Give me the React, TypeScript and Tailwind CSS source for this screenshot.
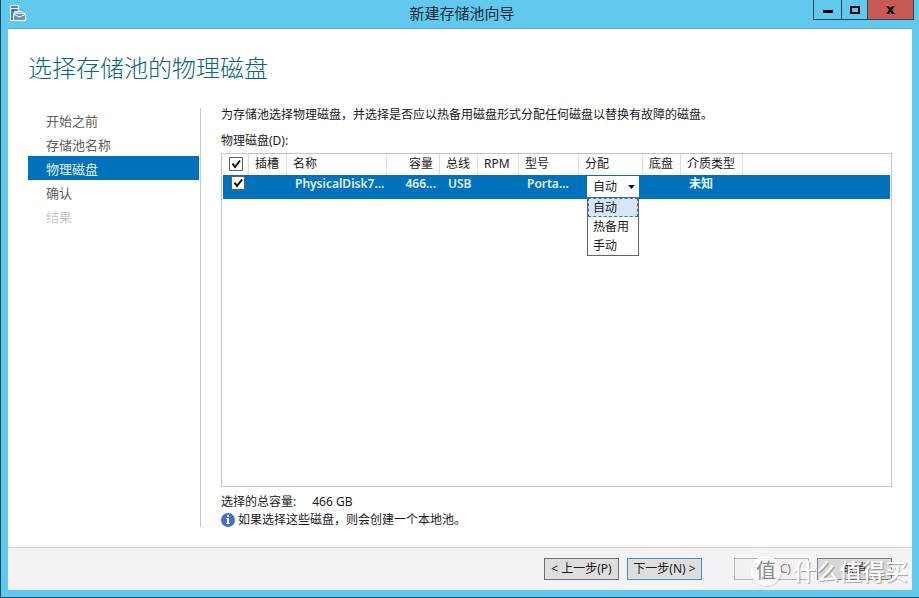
import { useState } from 'react';

const steps = [
  { label: '开始之前', state: 'normal' },
  { label: '存储池名称', state: 'normal' },
  { label: '物理磁盘', state: 'active' },
  { label: '确认', state: 'normal' },
  { label: '结果', state: 'disabled' },
];

const stepStyles: Record<string, string> = {
  normal: 'text-[#606060]',
  active: 'bg-[#0072bc] text-[#e4f3fc]',
  disabled: 'text-[#c8c8c8]',
};

const allocations = ['自动', '热备用', '手动'];

function ServerIcon() {
  return (
    <svg width="17" height="17" viewBox="0 0 17 17" fill="none">
      <path d="M0.500 0.500h8v6h-4v9h-4z" fill="#3a8fbd" stroke="#fff" />
      <path d="M1 3.500h7" stroke="#fff" />
      <path d="M2 5.500h3" stroke="#1f6c98" />
      <path d="M3.500 8.500h12v7h-12z" fill="#7590a3" stroke="#fff" />
      <path d="M6.500 8.500l1.500-2h3.500l1.500 2" fill="#62c9ee" stroke="#fff" />
      <path d="M4 9.500l5.500 2.500 5.500-2.500" stroke="#fff" />
    </svg>
  );
}

function InfoIcon() {
  return (
    <svg width="14" height="14" viewBox="0 0 14 14">
      <circle cx="7" cy="7" r="7" fill="#3f6fd1" />
      <rect x="6" y="2" width="2" height="2" fill="#fff" />
      <path d="M5 5h3v5h1v1H5v-1h1V6H5z" fill="#fff" />
    </svg>
  );
}

function Check({ label, checked, onChange }: { label: string; checked: boolean; onChange: (v: boolean) => void }) {
  return (
    <span className="grid h-[14px] w-[14px]">
      <input
        type="checkbox"
        aria-label={label}
        checked={checked}
        onChange={(e) => onChange(e.target.checked)}
        className="col-start-1 row-start-1 h-[14px] w-[14px] appearance-none border border-[#606060] bg-white"
      />
      {checked && (
        <svg className="pointer-events-none col-start-1 row-start-1" width="14" height="14" viewBox="0 0 14 14" fill="none">
          <path d="M3.500 6.500l2.500 3.500 5-6.500" stroke="#111" strokeWidth="2" />
        </svg>
      )}
    </span>
  );
}

export default function App() {
  const [all, setAll] = useState(true);
  const [selected, setSelected] = useState(true);
  const [allocation, setAllocation] = useState('自动');

  const th = 'border-r border-[#dcdcdc] px-[6px] text-left align-top font-normal';
  const td = 'overflow-hidden pl-2 text-left align-top whitespace-nowrap';
  const btn = 'h-[22px] w-[75px] border text-center whitespace-nowrap';

  return (
    <div className="flex min-h-screen flex-col border-b border-l border-[#14506a] bg-[#62c9ee] font-['Noto_Sans','Noto_Sans_CJK_SC',sans-serif] text-xs leading-[14px] text-[#1a1a1a]">
      <header className="grid h-7 grid-cols-[1fr_auto_1fr] items-start pr-[5px] pl-[9px]">
        <div className="pt-[5px]">
          <ServerIcon />
        </div>
        <div className="text-[15px] leading-[26px] text-[#0e2a38]">新建存储池向导</div>
        <div className="flex justify-self-end border-x border-b border-[#24455a]">
          <button aria-label="最小化" className="flex h-[19px] w-7 items-center justify-center border-r border-[#24455a]">
            <svg width="10" height="9" viewBox="0 0 10 9">
              <path d="M0 5h10v3H0z" fill="#000" />
            </svg>
          </button>
          <button aria-label="最大化" className="flex h-[19px] w-[26px] items-center justify-center border-r border-[#24455a]">
            <svg width="10" height="8" viewBox="0 0 10 8">
              <path d="M1 1h8v6H1z" fill="none" stroke="#000" strokeWidth="2" />
            </svg>
          </button>
          <button aria-label="关闭" className="flex h-[19px] w-[45px] items-center justify-center bg-[#c75b54]">
            <svg width="9" height="8" viewBox="0 0 9 8">
              <path d="M0 0h3l1.500 2L6 0h3L6 4l3 4H6L4.500 6 3 8H0l3-4z" fill="#111" />
            </svg>
          </button>
        </div>
      </header>

      <div className="mr-[7px] mb-[7px] ml-[7px] flex flex-1 flex-col border-t border-[#6aaac4] bg-white">
        <main className="flex flex-1 flex-col px-5 pt-[23px] pb-5">
          <h1 className="text-2xl leading-8 font-light text-[#0c6580]">选择存储池的物理磁盘</h1>

          <div className="mt-6 flex flex-1">
            <nav className="w-[173px] shrink-0 border-r border-[#c8c8c8] pr-px text-[13px] leading-[26px]">
              {steps.map((s) => (
                <div key={s.label} className={`h-6 pl-[18px] ${stepStyles[s.state]}`}>
                  {s.label}
                </div>
              ))}
            </nav>

            <section className="ml-5 flex min-w-0 flex-1 flex-col">
              <p>为存储池选择物理磁盘，并选择是否应以热备用磁盘形式分配任何磁盘以替换有故障的磁盘。</p>
              <p className="mt-3">物理磁盘(D):</p>

              <div className="mt-[5px] flex-1 border border-[#c4c4c4] px-px">
                <table className="w-full table-fixed border-separate border-spacing-0 leading-[19px]">
                  <colgroup>
                    <col className="w-[26px]" />
                    <col className="w-[38px]" />
                    <col className="w-[100px]" />
                    <col className="w-[53px]" />
                    <col className="w-[38px]" />
                    <col className="w-[41px]" />
                    <col className="w-[60px]" />
                    <col className="w-[64px]" />
                    <col className="w-[38px]" />
                    <col className="w-[62px]" />
                    <col />
                  </colgroup>
                  <thead>
                    <tr className="h-[21px]">
                      <th className="border-r border-[#dcdcdc] pt-[3px] pl-[6px] align-top">
                        <Check label="全选" checked={all} onChange={setAll} />
                      </th>
                      <th className={th}>插槽</th>
                      <th className={th}>名称</th>
                      <th className="border-r border-[#dcdcdc] px-[6px] text-right align-top font-normal">容量</th>
                      <th className={th}>总线</th>
                      <th className={th}>RPM</th>
                      <th className={th}>型号</th>
                      <th className={th}>分配</th>
                      <th className={th}>底盘</th>
                      <th className={th}>介质类型</th>
                      <th />
                    </tr>
                  </thead>
                  <tbody>
                    <tr className="h-6 bg-[#0072bc] leading-[18px] font-semibold text-[#e4f3fc]">
                      <td className="pt-px pl-2 align-top">
                        <Check label="PhysicalDisk7" checked={selected} onChange={setSelected} />
                      </td>
                      <td />
                      <td className={td}>PhysicalDisk7...</td>
                      <td className="pr-1 text-right align-top whitespace-nowrap">466...</td>
                      <td className={td}>USB</td>
                      <td />
                      <td className={td}>Porta...</td>
                      <td className="pt-px pl-2 align-top">
                        <div className="relative w-[52px] font-normal text-[#1a1a1a]">
                          <div className="grid items-center">
                            <select
                              aria-label="分配"
                              value={allocation}
                              onChange={(e) => setAllocation(e.target.value)}
                              className="col-start-1 row-start-1 h-[21px] w-full appearance-none bg-white pl-[6px] leading-[21px]"
                            >
                              {allocations.map((a) => (
                                <option key={a}>{a}</option>
                              ))}
                            </select>
                            <svg className="pointer-events-none col-start-1 row-start-1 mr-1 justify-self-end" width="7" height="4" viewBox="0 0 7 4">
                              <path d="M0 0h7L3.500 4z" fill="#111" />
                            </svg>
                          </div>
                          <ul role="listbox" aria-label="分配选项" className="absolute top-full left-0 z-10 w-full border border-[#5a6470] bg-white leading-[17px]">
                            {allocations.map((a) => (
                              <li
                                key={a}
                                role="option"
                                aria-selected={a === allocation}
                                onClick={() => setAllocation(a)}
                                className={
                                  a === allocation
                                    ? 'border border-dashed border-[#3d6c9e] bg-[#d5e6f9] pl-[4px]'
                                    : 'border border-transparent pl-[4px]'
                                }
                              >
                                {a}
                              </li>
                            ))}
                          </ul>
                        </div>
                      </td>
                      <td />
                      <td className={td}>未知</td>
                      <td />
                    </tr>
                  </tbody>
                </table>
              </div>

              <div className="mt-2 flex gap-4">
                <span>选择的总容量:</span>
                <span>466 GB</span>
              </div>
              <div className="mt-1 flex gap-[3px]">
                <InfoIcon />
                <span>如果选择这些磁盘，则会创建一个本地池。</span>
              </div>
            </section>
          </div>
        </main>

        <footer className="relative flex justify-end border-t border-[#d4d4d8] bg-[#f5f2f6] py-[10px] pr-5">
          <div className="flex gap-2">
            <button className={`${btn} border-[#707070] bg-[#dedede]`}>&lt; 上一步(P)</button>
            <button className={`${btn} border-[#3d94d0] bg-[#dedede]`}>下一步(N) &gt;</button>
          </div>
          <div className="ml-8 flex gap-2">
            <button disabled className={`${btn} border-[#b4b4b4] bg-[#f3f0f3] text-[#858585]`}>
              创建(C)
            </button>
            <button className={`${btn} border-[#808080] bg-[#d8d8d8]`}>取消</button>
          </div>

          <div className="pointer-events-none absolute top-2 right-1 flex items-center gap-3">
            <span className="flex h-[30px] w-[30px] items-center justify-center rounded-full bg-white/80 text-xl text-[#8a8a8a] shadow-[1px_1px_1px_#0002]">
              值
            </span>
            <span className="text-[23px] leading-[30px] font-medium text-white [text-shadow:1px_1px_1px_#0005]">什么值得买</span>
          </div>
        </footer>
      </div>
    </div>
  );
}
